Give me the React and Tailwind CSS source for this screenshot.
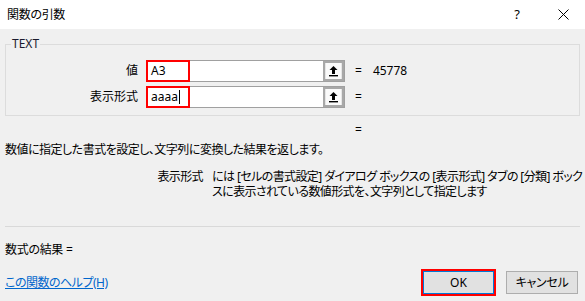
import React from 'react';

const UpArrow = () => (
    <svg width="11" height="12" viewBox="0 0 11 12">
        <path d="M5.5 1 L1.5 5 H4 V9 H7 V5 H9.5 Z" fill="#000" />
        <rect x="1" y="10" width="9" height="1.4" fill="#000" />
    </svg>
);

const RefInput = ({ value, cursor }) => (
    <div className="relative flex h-[22px] w-[199px] border border-[#a0a0a0] bg-white">
        <div className="flex flex-1 items-center pl-[4px] text-[12px] text-black">
            <span>{value}</span>
            {cursor && <span className="ml-[1px] h-[14px] w-px bg-black" />}
        </div>
        <div className="flex w-[21px] items-center justify-center border-2 border-[#a8a8a8] bg-[#e6e6e6]">
            <div className="flex h-[16px] w-[15px] items-center justify-center bg-[#fafafa]">
                <UpArrow />
            </div>
        </div>
        <div className="absolute -left-px -top-px h-[22px] w-[44px] border-2 border-[#ff0000]" />
    </div>
);

const ArgRow = ({ label, value, result, cursor }) => (
    <div className="flex h-[22px] items-center">
        <div className="w-[132px] shrink-0 text-right text-[12px]">{label}</div>
        <div className="ml-[8px]">
            <RefInput value={value} cursor={cursor} />
        </div>
        <span className="ml-[10px] text-[12px]">=</span>
        <span className="ml-[11px] text-[12px]">{result}</span>
    </div>
);

export default function App() {
    return (
        <div className="flex h-[301px] w-[585px] flex-col overflow-hidden bg-[#f0f0f0] font-['Noto_Sans','Noto_Sans_CJK_JP',sans-serif] text-black [font-feature-settings:'palt']">
            {/* title bar */}
            <div className="flex h-[29px] items-center bg-white pl-[7px] text-[12px]">
                <span className="flex-1 tracking-[-0.3px]">関数の引数</span>
                <span className="w-[12px] text-center text-[13px]">?</span>
                <span className="ml-[34px] mr-[16px] flex w-[12px] justify-center">
                    <svg width="11" height="11" viewBox="0 0 11 11">
                        <path d="M0.5 0.5 L10.5 10.5 M10.5 0.5 L0.5 10.5" stroke="#000" strokeWidth="1" />
                    </svg>
                </span>
            </div>

            {/* argument group */}
            <div className="relative mx-[5px] mt-[15px] h-[72px] shrink-0 border border-[#dcdcdc]">
                <span className="absolute -top-[9px] left-[5px] bg-[#f0f0f0] px-px text-[12px] leading-[16px] text-[#1a1a2e]">TEXT</span>
                <div className="mt-[15px] flex flex-col gap-[4px]">
                    <ArgRow label="値" value="A3" result="45778" />
                    <ArgRow label="表示形式" value="aaaa" result="" cursor />
                </div>
            </div>

            <div className="mt-[6px] flex h-[16px] shrink-0 items-center pl-[355px] text-[12px]">=</div>

            <div className="mt-[4px] flex h-[16px] shrink-0 items-center pl-[5px] text-[12px] tracking-[-0.5px]">
                数値に指定した書式を設定し、文字列に変換した結果を返します。
            </div>

            <div className="mt-[11px] flex shrink-0 text-[12px] leading-[15px] tracking-[-0.6px]">
                <div className="w-[212px] shrink-0 pr-[9px] text-right">表示形式</div>
                <div className="min-w-0 flex-1 whitespace-nowrap">
                    <div>には [セルの書式設定] ダイアログ ボックスの [表示形式] タブの [分類] ボック</div>
                    <div>スに表示されている数値形式を、文字列として指定します</div>
                </div>
            </div>

            <div className="mx-[5px] mt-[27px] h-px shrink-0 bg-[#d9d9d9]" />

            <div className="mt-[15px] flex h-[16px] shrink-0 items-center pl-[5px] text-[12px] tracking-[-0.3px]">数式の結果 =</div>

            <div className="mt-[11px] flex h-[27px] shrink-0 items-center pl-[5px] pr-[7px]">
                <a className="flex-1 text-[12px] tracking-[-0.5px] text-[#0066cc] underline">この関数のヘルプ(H)</a>
                <div className="flex h-[27px] w-[75px] items-center justify-center border-2 border-[#ff0000]">
                    <button className="flex h-[23px] w-[71px] items-center justify-center border border-[#0078d7] bg-[#e1e1e1] text-[12px]">OK</button>
                </div>
                <button className="ml-[10px] flex h-[23px] w-[72px] items-center justify-center border border-[#adadad] bg-[#e1e1e1] text-[12px] tracking-[-0.3px]">キャンセル</button>
            </div>
        </div>
    );
}
